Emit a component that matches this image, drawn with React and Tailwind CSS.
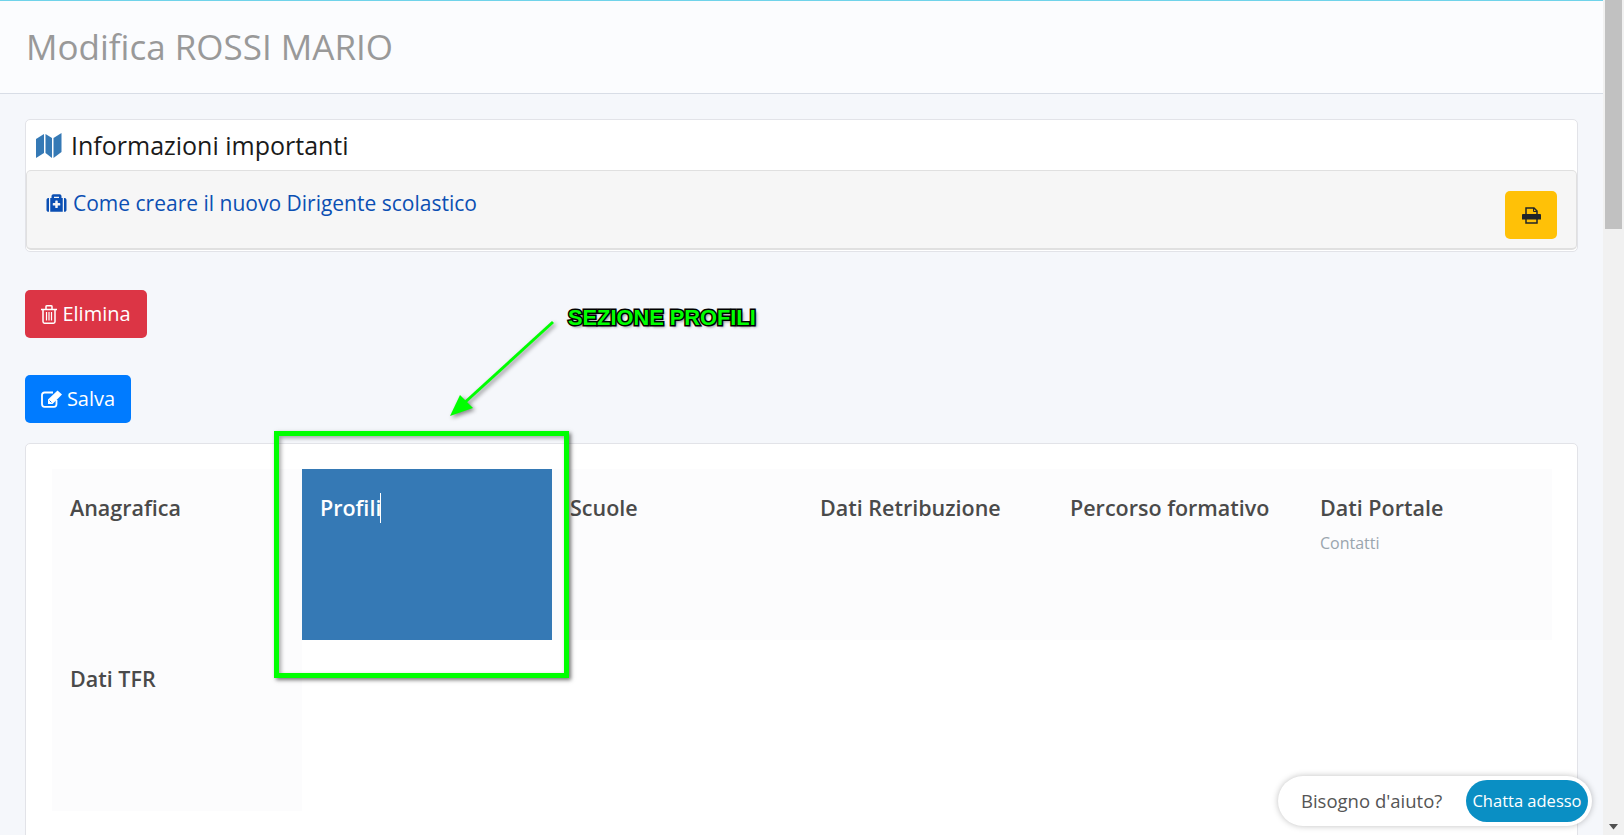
import { FaMedkit } from "react-icons/fa";

const tabs = ["Anagrafica", "Profili", "Scuole", "Dati Retribuzione", "Percorso formativo", "Dati Portale", "Dati TFR"];

const MapIcon = () => (
    <svg width="26" height="25" viewBox="0 0 26 25" fill="#3579b5">
        <path d="M0 6L8 1V20L0 25Z" />
        <path d="M9.500 1L16 5V25L9.500 20Z" />
        <path d="M17.500 5L25.500 0V19L17.500 25Z" />
    </svg>
);

const PrintIcon = () => (
    <svg width="19" height="17" viewBox="0 0 19 17" fill="none" stroke="#212529" strokeWidth="1.500">
        <path d="M4 7V1H12L15 4V7" />
        <path d="M4 12V16H15V12" />
        <path d="M11.500 1V4.500H15" strokeWidth="1" />
        <path d="M1 7H18C18.500 7 19 7.500 19 8V12.500H0V8C0 7.500 .5 7 1 7Z" fill="#212529" stroke="none" />
    </svg>
);

const TrashIcon = () => (
    <svg width="16" height="19" viewBox="0 0 16 19" fill="none" stroke="#ffffff" strokeWidth="1.500">
        <path d="M0 4.500H16" />
        <path d="M5 4V1.500C5 1 5.500 .8 6 .8H10C10.500 .8 11 1 11 1.500V4" />
        <path d="M2 4.500V16.500C2 17.500 2.800 18.200 3.500 18.200H12.500C13.200 18.200 14 17.500 14 16.500V4.500" />
        <path d="M5.500 7V15.500M8 7V15.500M10.500 7V15.500" strokeWidth="1.200" />
    </svg>
);

const EditIcon = () => (
    <svg width="22" height="18" viewBox="0 0 22 18" fill="none">
        <path d="M12 2.500H3.500C2 2.500 1 3.500 1 5V14C1 15.500 2 16.800 3.500 16.800H13C14.500 16.800 15.500 15.500 15.500 14V10" stroke="#ffffff" strokeWidth="1.800" />
        <path d="M7 9.500L16.500 0.500L21 4.500L11.500 14H7Z" fill="#ffffff" />
        <path d="M8.500 10.500L10.500 12.500" stroke="#007bff" strokeWidth="1" />
    </svg>
);

const Tab = ({ label }) => {
    const active = label === "Profili";
    return (
        <div className={`h-[171px] px-[18px] pt-[24px] ${active ? "bg-[#3579b5] text-white" : "bg-[#fcfcfd] text-[#4a4a4a]"}`}>
            <div className="flex h-[30px] items-center text-[21.500px] font-semibold leading-[30px]">
                {label}
                {active && <span className="ml-[-1px] h-[30px] w-[1px] bg-white"></span>}
            </div>
            {label === "Dati Portale" && <div className="mt-[9px] text-[16px] leading-[22px] text-[#9aa5ae]">Contatti</div>}
        </div>
    );
};

const App = () => {
    return (
        <div className="relative flex h-[835px] w-[1624px] overflow-hidden bg-[#f5f7fb] font-['Open_Sans',sans-serif]">
            <main className="w-[1603px] shrink-0">
                <header className="flex h-[94px] items-center border-t border-b border-t-[#6fd3ea] border-b-[#d8dde6] bg-[#fbfcfe] px-[26px]">
                    <h1 className="text-[35px] leading-[46px] text-[#999999]">Modifica ROSSI MARIO</h1>
                </header>

                <div className="px-[25px] pt-[25px]">
                    <section className="rounded-[5px] border border-[#e2e3e8] bg-white">
                        <div className="flex h-[50px] items-center gap-[9px] pl-[10px]">
                            <MapIcon />
                            <h2 className="text-[25px] leading-[32px] text-[#1a1a1a]">Informazioni importanti</h2>
                        </div>
                        <div className="mb-[1px] flex h-[80px] items-start justify-between rounded-[5px] border-b-2 border-l border-r border-t border-[#e0e0e0] bg-[#f6f6f6] pl-[19px] pr-[19px]">
                            <a className="mt-[18px] flex items-center gap-[6px] text-[21px] leading-[28px] text-[#0b4fb3]">
                                <FaMedkit className="h-[20px] w-[21px]" />
                                Come creare il nuovo Dirigente scolastico
                            </a>
                            <button className="mt-[20px] flex h-[48px] w-[52px] items-center justify-center rounded-[5px] bg-[#ffc107]">
                                <PrintIcon />
                            </button>
                        </div>
                    </section>

                    <button className="mt-[38px] flex h-[48px] w-[122px] items-center justify-center gap-[5px] rounded-[5px] bg-[#dc3545] text-[20px] text-white">
                        <TrashIcon />
                        Elimina
                    </button>
                    <button className="mt-[37px] flex h-[48px] w-[106px] items-center justify-center gap-[4px] rounded-[5px] bg-[#007bff] text-[20px] text-white">
                        <EditIcon />
                        Salva
                    </button>

                    <section className="mt-[20px] h-[500px] rounded-[5px] border border-[#e2e3e8] bg-white px-[26px] pt-[25px]">
                        <div className="grid w-[1500px] grid-cols-6">
                            {tabs.map((tab) => (
                                <Tab key={tab} label={tab} />
                            ))}
                        </div>
                    </section>
                </div>
            </main>

            {/* scrollbar */}
            <div className="relative flex-1 bg-[#f1f1f1] pl-[2px]">
                <div className="h-[229px] w-[17px] bg-[#c1c1c1]"></div>
                <svg className="absolute bottom-[5px] right-[6px]" width="9" height="6" viewBox="0 0 9 6"><path d="M0 0h9L4.500 5.500z" fill="#505050" /></svg>
            </div>

            {/* annotation */}
            <div className="absolute left-[274px] top-[431px] h-[247px] w-[295px] border-[5px] border-[#00ff00] shadow-[2px_2px_4px_rgba(0,0,0,0.55),inset_2px_2px_4px_rgba(0,0,0,0.35)]"></div>
            <svg className="absolute left-[440px] top-[310px]" width="125" height="115" viewBox="440 310 125 115" style={{ filter: "drop-shadow(2px 2px 2px rgba(0,0,0,0.45))" }}>
                <path d="M553 322L462 405" stroke="#00ff00" strokeWidth="3" fill="none" />
                <path d="M450 416L460 395L473 408z" fill="#00ff00" />
            </svg>
            <div className="absolute left-[568px] top-[305px] font-['Liberation_Sans',sans-serif] text-[21.800px] font-bold leading-[26px] text-[#00ff00] [-webkit-text-stroke:3px_#000] [paint-order:stroke_fill] [text-shadow:2px_2px_3px_rgba(0,0,0,0.5)]">
                SEZIONE PROFILI
            </div>

            {/* chat */}
            <div className="absolute left-[1278px] top-[776px] flex h-[50px] w-[314px] items-center justify-between rounded-full bg-white pl-[23px] pr-[4px] shadow-[0_0_6px_rgba(0,0,0,0.25)]">
                <span className="text-[18.500px] text-[#555555]">Bisogno d'aiuto?</span>
                <span className="flex h-[42px] w-[122px] items-center justify-center rounded-full bg-[#0a8fc4] text-[16.500px] font-medium text-white">Chatta adesso</span>
            </div>
        </div>
    );
};

export default App;
